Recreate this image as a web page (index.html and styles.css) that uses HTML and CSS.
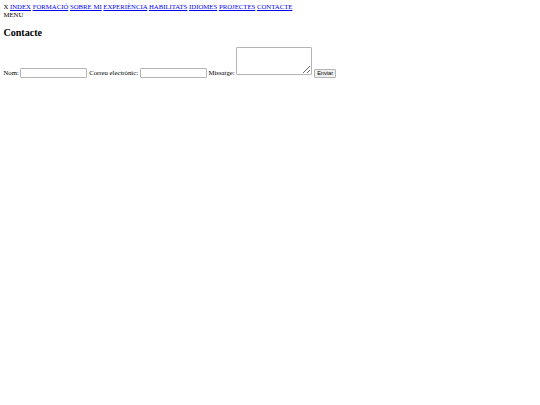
FILE: index.html
```html
<!DOCTYPE html>
<html lang="ca">
<head>
<meta charset="utf-8">
<title>Contacte</title>
<link rel="stylesheet" href="styles.css">
</head>
<body class="page">
<header class="topbar">
  <nav class="nav">
    <span class="close">X</span>
    <a href="#" class="nav-link">INDEX</a>
    <a href="#" class="nav-link">FORMACIÓ</a>
    <a href="#" class="nav-link">SOBRE MI</a>
    <a href="#" class="nav-link">EXPERIÈNCIA</a>
    <a href="#" class="nav-link">HABILITATS</a>
    <a href="#" class="nav-link">IDIOMES</a>
    <a href="#" class="nav-link">PROJECTES</a>
    <a href="#" class="nav-link">CONTACTE</a>
  </nav>
  <div class="menu">MENU</div>
</header>
<main>
  <h2 class="title">Contacte</h2>
  <form class="contact-form">
    <label class="lbl" for="nom">Nom:</label>
    <input class="field" type="text" id="nom">
    <label class="lbl" for="correu">Correu electrònic:</label>
    <input class="field" type="email" id="correu">
    <label class="lbl" for="missatge">Missatge:</label>
    <textarea class="area" id="missatge"></textarea>
    <button class="btn" type="submit">Enviar</button>
  </form>
</main>
</body>
</html>
```

FILE: styles.css
```css
.page {
  margin: 3.4px;
  font-family: "Liberation Serif", "Times New Roman", serif;
  font-size: 6.75px;
  line-height: 7.8px;
  color: #000;
  background: #fff;
}
.nav {
  display: block;
}
.nav-link {
  color: #0000ee;
  text-decoration: underline;
}
.menu {
  display: block;
}
.title {
  font-size: 10.1px;
  line-height: 11.6px;
  font-weight: bold;
  margin: 8.4px 0;
}
.contact-form {
  display: block;
}
.field {
  box-sizing: border-box;
  width: 67px;
  height: 10px;
  padding: 0 1px;
  border: 1px solid #b5b5b5;
  border-radius: 1px;
  font-size: 5.6px;
  vertical-align: baseline;
  margin: 0;
}
.area {
  box-sizing: border-box;
  width: 76px;
  height: 27.5px;
  padding: 1px;
  border: 1px solid #b5b5b5;
  border-radius: 1px;
  font-size: 5.6px;
  vertical-align: baseline;
  margin: 0;
  resize: both;
}
.btn {
  box-sizing: border-box;
  height: 9.5px;
  width: 22px;
  padding: 0;
  font-family: "Liberation Sans", Arial, sans-serif;
  font-size: 5.6px;
  line-height: 7px;
  border: 1px solid #b5b5b5;
  border-radius: 1px;
  background: #efefef;
  color: #000;
  vertical-align: baseline;
  margin: 0;
}
```
